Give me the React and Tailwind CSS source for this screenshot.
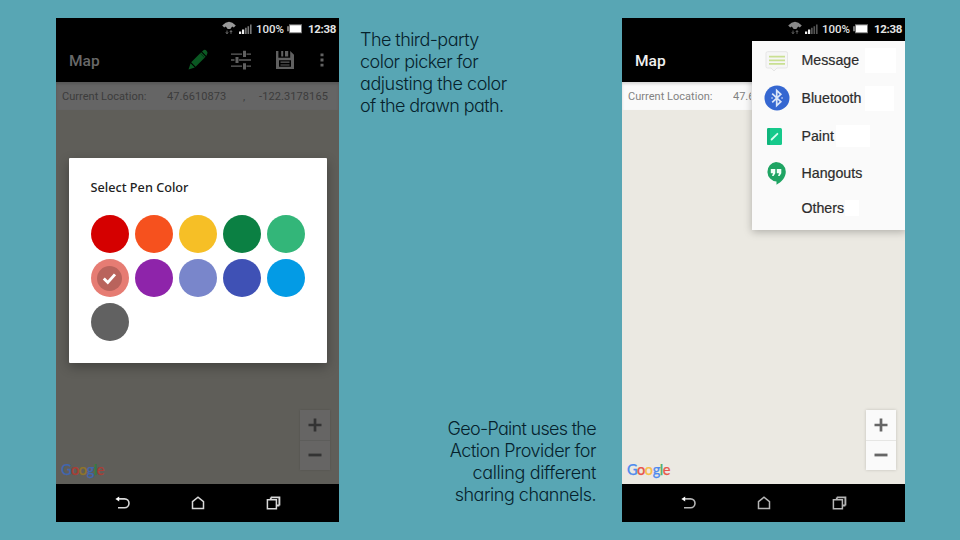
import React from "react";

const GOOGLE = [
  ["G", "text-[#4f8bee]", "text-[#3f66b0]"],
  ["o", "text-[#e8574c]", "text-[#a83e36]"],
  ["o", "text-[#f7c04a]", "text-[#8f742a]"],
  ["g", "text-[#4f8bee]", "text-[#3f66b0]"],
  ["l", "text-[#4fae68]", "text-[#32803f]"],
  ["e", "text-[#e8574c]", "text-[#a83e36]"],
];

const SWATCHES = [
  "bg-[#d50000]", "bg-[#f6511e]", "bg-[#f6bf26]", "bg-[#0b8043]", "bg-[#33b679]",
  "bg-[#e67c73]", "bg-[#8e24aa]", "bg-[#7986cb]", "bg-[#3f51b5]", "bg-[#039be5]",
  "bg-[#616161]",
];

function StatusBar({ dim }) {
  return (
    <div className="flex h-5 shrink-0 items-center justify-end bg-black pr-[3px] font-['Roboto',sans-serif] text-[11.5px] leading-none text-[#e4e4e4]">
      <svg width="14" height="16" viewBox="0 0 14 16" className={dim ? "text-[#999]" : "text-[#888]"}>
        <path d="M0.2 5.400Q7 -2 13.800 5.400L11.800 7.600 10.200 6.600 8.300 9H5.700L3.800 6.600 2.200 7.600Z" fill="currentColor" />
        <path d="M5 10.500v3.200M3.800 12.300L5 13.700l1.200-1.400M9 13.900v-3.200M7.800 12L9 10.600l1.200 1.400" fill="none" stroke="currentColor" strokeWidth="1" opacity=".65" />
      </svg>
      <svg width="13" height="10" viewBox="0 0 13 10" className="ml-[3px] mt-[2px]">
        <path d="M0 7.500h2.200V10H0zM3 5.500h2.200V10H3z" fill="#eee" />
        <path d="M6 3.800h1.700V10H6zM8.500 2.200h1.600V10H8.500zM11 .5h1.600V10H11z" fill={dim ? "#777" : "#555"} />
      </svg>
      <span className="ml-[4px] mt-[3px] w-[29px] font-medium">100%</span>
      <svg width="17" height="10" viewBox="0 0 17 10" className="ml-px mt-px">
        <path d="M3 .3h13v9H3V7.300H1V2.300h2z" fill="#777" />
        <path d="M4 1.300h11v7H4z" fill="#fff" />
      </svg>
      <span className="ml-[5px] mt-[3px] w-[28px] font-bold tracking-[-0.3px]">12:38</span>
    </div>
  );
}

function ActionIcons() {
  return (
    <div className="flex items-center pr-[15px]">
      <svg width="22" height="22" viewBox="0 0 22 22">
        <path d="M1.500 20.500L3.600 14.200 7.800 18.400Z" fill="#0b5a23" />
        <path d="M4.200 13.300L14.200 3.300 18.600 7.700 8.600 17.700Z" fill="#0a5822" />
        <path d="M15 2.500L16.800 1q1.600-.6 2.900.9 1.300 1.400.6 2.800L19.300 7Z" fill="#0b5a23" />
        <path d="M13.200 4.300l4.400 4.400" stroke="#053514" strokeWidth="1" />
      </svg>
      <svg width="20" height="20" viewBox="0 0 20 20" className="ml-[22px]">
        <path d="M0 4.200h11M15.500 4.200H20M0 10h3.500M8 10h12M0 16.200h11M15.500 16.200H20" stroke="#606060" strokeWidth="1.300" />
        <path d="M12 .7h3v6.200h-3zM4.500 6.900h3v6.200h-3zM12 13.200h3v6.200h-3z" fill="#606060" />
      </svg>
      <svg width="18" height="18" viewBox="0 0 18 18" className="ml-[25px]">
        <path d="M0 0H2.400V6.800H14.200V0L18 3.800V18H0ZM3 9.200V15.800H15V9.200Z" fill="#606060" fillRule="evenodd" />
        <path d="M5.200 0h2v5.500h-2zM9 0h3.200v5.500H9zM4.500 10.600h9v1.100h-9zM4.500 13.400h9v1.100h-9z" fill="#606060" />
      </svg>
      <svg width="4" height="14" viewBox="0 0 4 14" className="ml-[26px]">
        <path d="M.5 .5h3v2.800h-3zM.5 5.600h3v2.800h-3zM.5 10.700h3v2.800h-3z" fill="#626262" />
      </svg>
    </div>
  );
}

function NavBar({ dim }) {
  return (
    <div className={`flex h-[38px] shrink-0 items-center justify-center gap-[61px] bg-black ${dim ? "text-[#d8d8d8]" : "text-[#b5b5b5]"}`}>
      <svg width="15" height="14" viewBox="0 0 15 14" fill="none" stroke="currentColor" strokeWidth="1.600">
        <path d="M3 2.900h6.600a4.400 4.400 0 0 1 0 8.800H3" />
        <path d="M.4 2.900L4.200 .4v5z" fill="#fff" stroke="none" />
      </svg>
      <svg width="14" height="14" viewBox="0 0 14 14" fill="none" stroke="currentColor" strokeWidth="1.500">
        <path d="M1.500 5.600L7 1.200l5.500 4.400v6.900h-11z" />
      </svg>
      <svg width="15" height="14" viewBox="0 0 15 14" fill="none" stroke="currentColor" strokeWidth="1.500">
        <path d="M1.400 3.800h9v9h-9z" />
        <path d="M4.800 1.400h8.600v8.200M4.800 1.400v2.200M13.400 9.500h-2.600" strokeWidth="1.900" />
      </svg>
    </div>
  );
}

function Phone({ dim, children }) {
  const location = dim ? "bg-[#656565] text-[#3c3c3c]" : "bg-[#fafafa] text-[#828282]";
  return (
    <div className="relative flex h-[504px] w-[283px] shrink-0 flex-col overflow-hidden bg-black">
      <StatusBar dim={dim} />
      <div className="flex h-11 shrink-0 items-center justify-between pl-[13px]">
        <span className={`pt-[3px] font-['Roboto',sans-serif] text-[15.5px] font-medium ${dim ? "text-[#686868]" : "text-[#f0f0f0]"}`}>Map</span>
        {dim && <ActionIcons />}
      </div>
      <div className={`flex h-7 shrink-0 items-center whitespace-nowrap pl-[6px] pt-[2px] font-['Roboto',sans-serif] text-[11px] shadow-[inset_0_2px_3px_rgba(0,0,0,0.15)] ${location}`}>
        <span className="w-[105px] tracking-[0.03px]">Current Location:</span>
        {dim ? (
          <>
            <span className="w-[76px] tracking-[0.08px]">47.6610873</span>
            <span className="w-[16px]">,</span>
            <span className="tracking-[0.1px]">-122.3178165</span>
          </>
        ) : (
          <span className="w-[18px] overflow-hidden">47.6</span>
        )}
      </div>
      <div className={`flex flex-1 items-end justify-between pb-[14px] pl-[5px] pr-[9px] ${dim ? "bg-[#5f5e59]" : "bg-[#ebe9e2]"}`}>
        <div className="-mb-[10px] font-['Lato',sans-serif] text-[14.5px] font-medium leading-5 tracking-[-0.45px] [-webkit-text-stroke:0.25px_currentColor]">
          {GOOGLE.map(([ch, light, dark], i) => (
            <span key={i} className={dim ? dark : light}>{ch}</span>
          ))}
        </div>
        <div className={`flex h-[60px] w-[30px] flex-col ${dim ? "bg-[#666564] text-[#333] shadow-[0_0_2px_rgba(0,0,0,0.15)]" : "bg-[#fafafa] text-[#666] shadow-[0_0_3px_rgba(0,0,0,0.18)]"}`}>
          <div className={`flex flex-1 items-center justify-center border-b ${dim ? "border-[#5d5d5b]" : "border-[#e6e6e4]"}`}>
            <svg width="14" height="14" viewBox="0 0 14 14"><path d="M.5 7h13M7 .5v13" stroke="currentColor" strokeWidth="2.700" /></svg>
          </div>
          <div className="flex flex-1 items-center justify-center">
            <svg width="14" height="14" viewBox="0 0 14 14"><path d="M.5 7h13" stroke="currentColor" strokeWidth="2.800" /></svg>
          </div>
        </div>
      </div>
      <NavBar dim={dim} />
      {children}
    </div>
  );
}

function ColorDialog() {
  return (
    <div className="absolute left-[12.5px] top-[140px] h-[205px] w-[258px] rounded-[1px] bg-white pl-[22px] pt-[20px] shadow-[0_4px_12px_rgba(0,0,0,0.3)]">
      <h2 className="font-['Noto_Sans',sans-serif] text-[12.7px] font-medium leading-[18px] text-[#222]">Select Pen Color</h2>
      <div className="mt-[19px] grid w-[214px] grid-cols-5 gap-[6px]">
        {SWATCHES.map((color, i) => (
          <div key={color} className={`flex h-[38px] w-[38px] items-center justify-center rounded-full ${color}`}>
            {i === 5 && (
              <div className="flex h-[25px] w-[25px] items-center justify-center rounded-full bg-[#b9635c]">
                <svg width="15" height="13" viewBox="0 0 15 13"><path d="M1.800 6.500L5.800 10.500 13 2.400" fill="none" stroke="#fff" strokeWidth="2.900" /></svg>
              </div>
            )}
          </div>
        ))}
      </div>
    </div>
  );
}

const MessageIcon = () => (
  <svg width="26" height="24" viewBox="0 0 26 24">
    <path d="M3.500 2.700h18.500q1.500 0 1.500 1.500v13.300q0 1.500-1.500 1.500H13l-3 3-3-3H3.500Q2 19 2 17.500V4.200q0-1.500 1.500-1.500z" fill="#f6f6f6" stroke="#e6e6e6" strokeWidth="1" />
    <path d="M5 7.700h16M5 11.300h16M5 14.900h16" stroke="#c9e092" strokeWidth="1.700" />
  </svg>
);
const BluetoothIcon = () => (
  <svg width="26" height="26" viewBox="0 0 26 26">
    <circle cx="13" cy="13" r="12.500" fill="#3567d1" />
    <path d="M8.200 8.600L16.800 16.700 12.700 20.500V5.500L16.800 9.300 8.200 17.400" fill="none" stroke="#dbe5f8" strokeWidth="1.700" />
    <path d="M8 13h.1M18 13h.1" stroke="#dbe5f8" strokeWidth="1.600" strokeLinecap="round" />
  </svg>
);
const PaintIcon = () => (
  <svg width="20" height="17" viewBox="0 0 20 17">
    <rect width="15" height="17" rx="1.500" fill="#16c98b" />
    <path d="M0 1.500Q0 0 1.500 0H3v17H1.500Q0 17 0 15.500z" fill="#0fb57c" />
    <path d="M4.600 11.500l5.800-5.700" stroke="#d8fff0" strokeWidth="1.800" strokeLinecap="round" />
  </svg>
);
const HangoutsIcon = () => (
  <svg width="22" height="23" viewBox="0 0 22 23">
    <path d="M10 0a9.800 9.800 0 0 1 9.800 9.800c0 5.700-4.400 10.400-9.300 12.900v-3.200A9.800 9.800 0 0 1 10 0z" fill="#1fa463" />
    <path d="M4.800 7h4.500v4.200L7.600 14H6l1-2.800H4.800zM10.800 7h4.500v4.200L13.600 14H12l1-2.800h-2.200z" fill="#f2fff8" />
  </svg>
);

const CHANNELS = [
  ["Message", MessageIcon, "h-[39px]", "ml-[6px] h-[25px] w-[31px]"],
  ["Bluetooth", BluetoothIcon, "h-[36px]", "ml-[4px] h-[25px] w-[29px]"],
  ["Paint", PaintIcon, "h-[40px]", "ml-[2px] h-[22px] w-[34px]"],
  ["Hangouts", HangoutsIcon, "h-[34px]", null],
  ["Others", null, "h-[36px]", "ml-[1px] h-[16px] w-[14px]"],
];

function ShareMenu() {
  return (
    <div className="absolute -right-[1px] top-[23px] h-[189px] w-[154.5px] bg-[#fafafa] shadow-[0_2px_8px_rgba(0,0,0,0.25)]">
      {CHANNELS.map(([name, Icon, height, patch]) => (
        <div key={name} className={`flex items-center ${height}`}>
          <span className="flex w-[50px] items-center justify-center">{Icon && <Icon />}</span>
          <span className="font-['Liberation_Sans',Arial,sans-serif] text-[14.200px] leading-none text-[#2c2c2c] [-webkit-text-stroke:0.2px_currentColor]">{name}</span>
          {patch && <span className={`bg-white ${patch}`} />}
        </div>
      ))}
    </div>
  );
}

const captionText = "whitespace-nowrap font-['Inter',sans-serif] text-[18px] font-light leading-[22px] text-[#06222c] [font-feature-settings:'cv11','calt'_0]";

export default function App() {
  return (
    <main className="flex h-[540px] w-[960px] overflow-hidden bg-[#58a6b4] pl-[56px] pt-[18px]">
      <Phone dim>
        <ColorDialog />
      </Phone>
      <section className="flex h-[504px] w-[283px] shrink-0 flex-col justify-between pb-[16px] pl-[21px] pr-[26px] pt-[11px]">
        <p className={captionText}>
          <span className="tracking-[-0.55px]">The third-party</span><br />
          <span className="tracking-[-0.5px]">color picker for</span><br />
          <span className="tracking-[-0.45px]">adjusting the color</span><br />
          <span className="tracking-[-0.6px]">of the drawn path.</span>
        </p>
        <p className={`text-right ${captionText}`}>
          <span className="tracking-[-0.7px]">Geo-Paint uses the</span><br />
          <span className="tracking-[-0.5px]">Action Provider for</span><br />
          <span className="tracking-[-0.35px]">calling different</span><br />
          <span className="tracking-[-0.5px]">sharing channels.</span>
        </p>
      </section>
      <Phone>
        <ShareMenu />
      </Phone>
    </main>
  );
}
